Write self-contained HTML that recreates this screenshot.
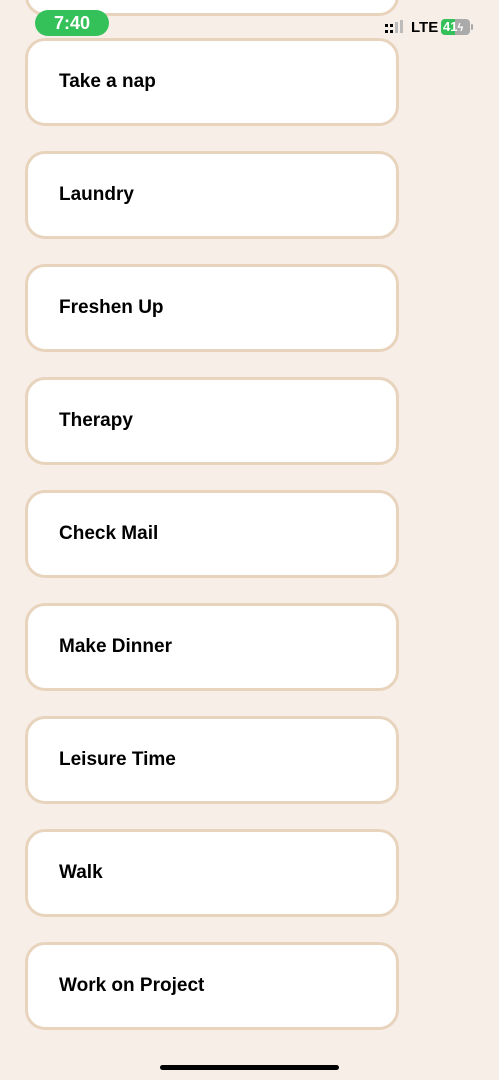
<!DOCTYPE html>
<html><head><meta charset="utf-8"><style>
body{margin:0;width:499px;height:1080px;background:#f6eee7;position:relative;overflow:hidden;font-family:"Liberation Sans",Arial,sans-serif;}
.card{position:absolute;left:25px;width:368px;height:82px;background:#fff;border:3px solid #e8d4bd;border-radius:20px;}
.card span{position:absolute;left:31px;top:30px;font-weight:bold;font-size:19px;color:#000;letter-spacing:0px;}
.time{position:absolute;left:35px;top:10px;width:74px;height:26px;background:#35c15a;border-radius:13px;color:#fff;font-weight:bold;font-size:18px;text-align:center;line-height:26px;}
.home{position:absolute;left:160px;top:1065px;width:179px;height:5px;border-radius:3px;background:#000;}
</style></head><body>
<div class="card" style="top:-72px"></div>
<div class="time">7:40</div>
<div style="position:absolute;left:385px;top:21px;width:24px;height:14px;">
<div style="position:absolute;left:0;top:3px;width:3px;height:3px;background:#000"></div>
<div style="position:absolute;left:0;top:9px;width:3px;height:3px;background:#000"></div>
<div style="position:absolute;left:5px;top:3px;width:3px;height:3px;background:#000"></div>
<div style="position:absolute;left:5px;top:9px;width:3px;height:3px;background:#000"></div>
<div style="position:absolute;left:10px;top:1px;width:3px;height:11px;background:#bbb"></div>
<div style="position:absolute;left:15px;top:-1px;width:3px;height:13px;background:#bbb"></div>
</div>
<div style="position:absolute;left:411px;top:19px;font-weight:bold;font-size:15px;">LTE</div>
<div style="position:absolute;left:441px;top:19px;width:29px;height:16px;border-radius:4px;background:#aaa;overflow:hidden;">
<div style="position:absolute;left:0;top:0;width:14px;height:16px;background:#35c15a"></div>
<div style="position:absolute;left:2px;top:0;color:#fff;font-weight:bold;font-size:13px;line-height:16px;">41<span style="font-size:11px">ϟ</span></div>
</div>
<div style="position:absolute;left:471px;top:24px;width:2px;height:6px;background:#aaa;border-radius:1px"></div>
<div class="card" style="top:38px"><span>Take a nap</span></div>
<div class="card" style="top:151px"><span>Laundry</span></div>
<div class="card" style="top:264px"><span>Freshen Up</span></div>
<div class="card" style="top:377px"><span>Therapy</span></div>
<div class="card" style="top:490px"><span>Check Mail</span></div>
<div class="card" style="top:603px"><span>Make Dinner</span></div>
<div class="card" style="top:716px"><span>Leisure Time</span></div>
<div class="card" style="top:829px"><span>Walk</span></div>
<div class="card" style="top:942px"><span>Work on Project</span></div>
<div class="home"></div>
</body></html>
